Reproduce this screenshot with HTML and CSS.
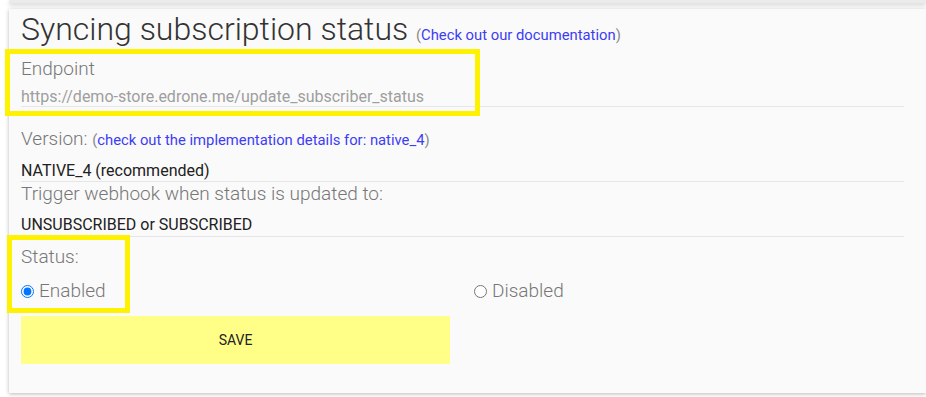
FILE: index.html
```html
<!DOCTYPE html>
<html>
<head>
    <title>Syncing subscription status</title>
    <link rel="stylesheet" href="styles.css">
</head>
<body>
    <div class="page">
        <div class="prev-card"></div>

        <div class="card">
            <h1 class="title">Syncing subscription status <span class="hint">(<a href="#">Check out our documentation</a>)</span></h1>

            <div class="field field-endpoint">
                <label class="label" for="endpoint">Endpoint</label>
                <input class="input" id="endpoint" type="text" value="https://demo-store.edrone.me/update_subscriber_status" readonly />
            </div>

            <div class="field field-version">
                <div class="label">Version: <span class="hint">(<a href="#">check out the implementation details for: native_4</a>)</span></div>
                <div class="value">NATIVE_4 (recommended)</div>
            </div>

            <div class="field field-trigger">
                <div class="label">Trigger webhook when status is updated to:</div>
                <div class="value">UNSUBSCRIBED or SUBSCRIBED</div>
            </div>

            <div class="field field-status">
                <div class="label">Status:</div>
                <div class="radios">
                    <label class="radio"><input type="radio" name="status" value="enabled" checked /> Enabled</label>
                    <label class="radio"><input type="radio" name="status" value="disabled" /> Disabled</label>
                </div>
            </div>

            <button class="save" type="button">SAVE</button>
        </div>

        <!-- annotation frames -->
        <div class="mark mark-endpoint"></div>
        <div class="mark mark-status"></div>
    </div>
</body>
</html>
```

FILE: styles.css
```css
body {
    margin: 0;
    background-color: #ffffff;
    font-family: Roboto, "Liberation Sans", sans-serif;
}
.page {
    position: relative;
    overflow: hidden;
    height: 397px;
}
.prev-card {
    height: 3px;
    margin-left: 9px;
    background-color: #ebebeb;
    box-shadow: 0 2px 4px rgba(0, 0, 0, 0.22);
}
.card {
    margin: 6px 0 0 9px;
    padding: 2px 0 29px 12px;
    background-color: #fafafa;
    box-shadow: 0 1px 4px rgba(0, 0, 0, 0.28);
}
.title {
    margin: 0;
    font-size: 32px;
    font-weight: 300;
    line-height: 36px;
    color: #333333;
}
.hint {
    font-size: 14.8px;
    font-weight: 400;
    line-height: 1;
    color: #8a8a8a;
}
.hint a {
    color: #3d3df5;
    text-decoration: none;
}
.field {
    width: 883px;
}
.label {
    display: block;
    font-size: 19px;
    font-weight: 300;
    line-height: 24px;
    color: #777777;
}
.value {
    padding-bottom: 1px;
    border-bottom: 1px solid #e6e6e6;
    font-size: 16px;
    line-height: 19px;
    color: #212121;
}
.input {
    display: block;
    box-sizing: border-box;
    width: 100%;
    height: 21px;
    margin: 5px 0 0 0;
    padding: 0;
    border: 0;
    border-bottom: 1px solid #e6e6e6;
    background: transparent;
    font-family: Roboto, "Liberation Sans", sans-serif;
    font-size: 16px;
    line-height: 20px;
    color: #9e9e9e;
    outline: none;
}
.field-endpoint {
    margin-top: 10px;
}
.field-version {
    margin-top: 20px;
}
.field-version .value {
    margin-top: 10px;
}
.field-trigger .value {
    margin-top: 9px;
    padding-bottom: 2px;
}
.field-status {
    margin-top: 8px;
}
.radios {
    display: grid;
    grid-template-columns: 453px 1fr;
    margin-top: 10px;
}
.radio {
    display: flex;
    align-items: center;
    font-size: 19px;
    font-weight: 300;
    line-height: 24px;
    color: #777777;
}
.radio input {
    width: 13px;
    height: 13px;
    margin: 1px 5px 0 0;
}
.save {
    display: block;
    width: 429px;
    height: 48px;
    margin-top: 13px;
    border: 0;
    background-color: #ffff88;
    font-family: Roboto, "Liberation Sans", sans-serif;
    font-size: 14px;
    color: #222222;
    cursor: pointer;
}
.mark {
    position: absolute;
    box-sizing: border-box;
    border: 5px solid #fff200;
    pointer-events: none;
}
.mark-endpoint {
    left: 5px;
    top: 49px;
    width: 475px;
    height: 67px;
}
.mark-status {
    left: 7px;
    top: 235px;
    width: 123px;
    height: 78px;
}
```
